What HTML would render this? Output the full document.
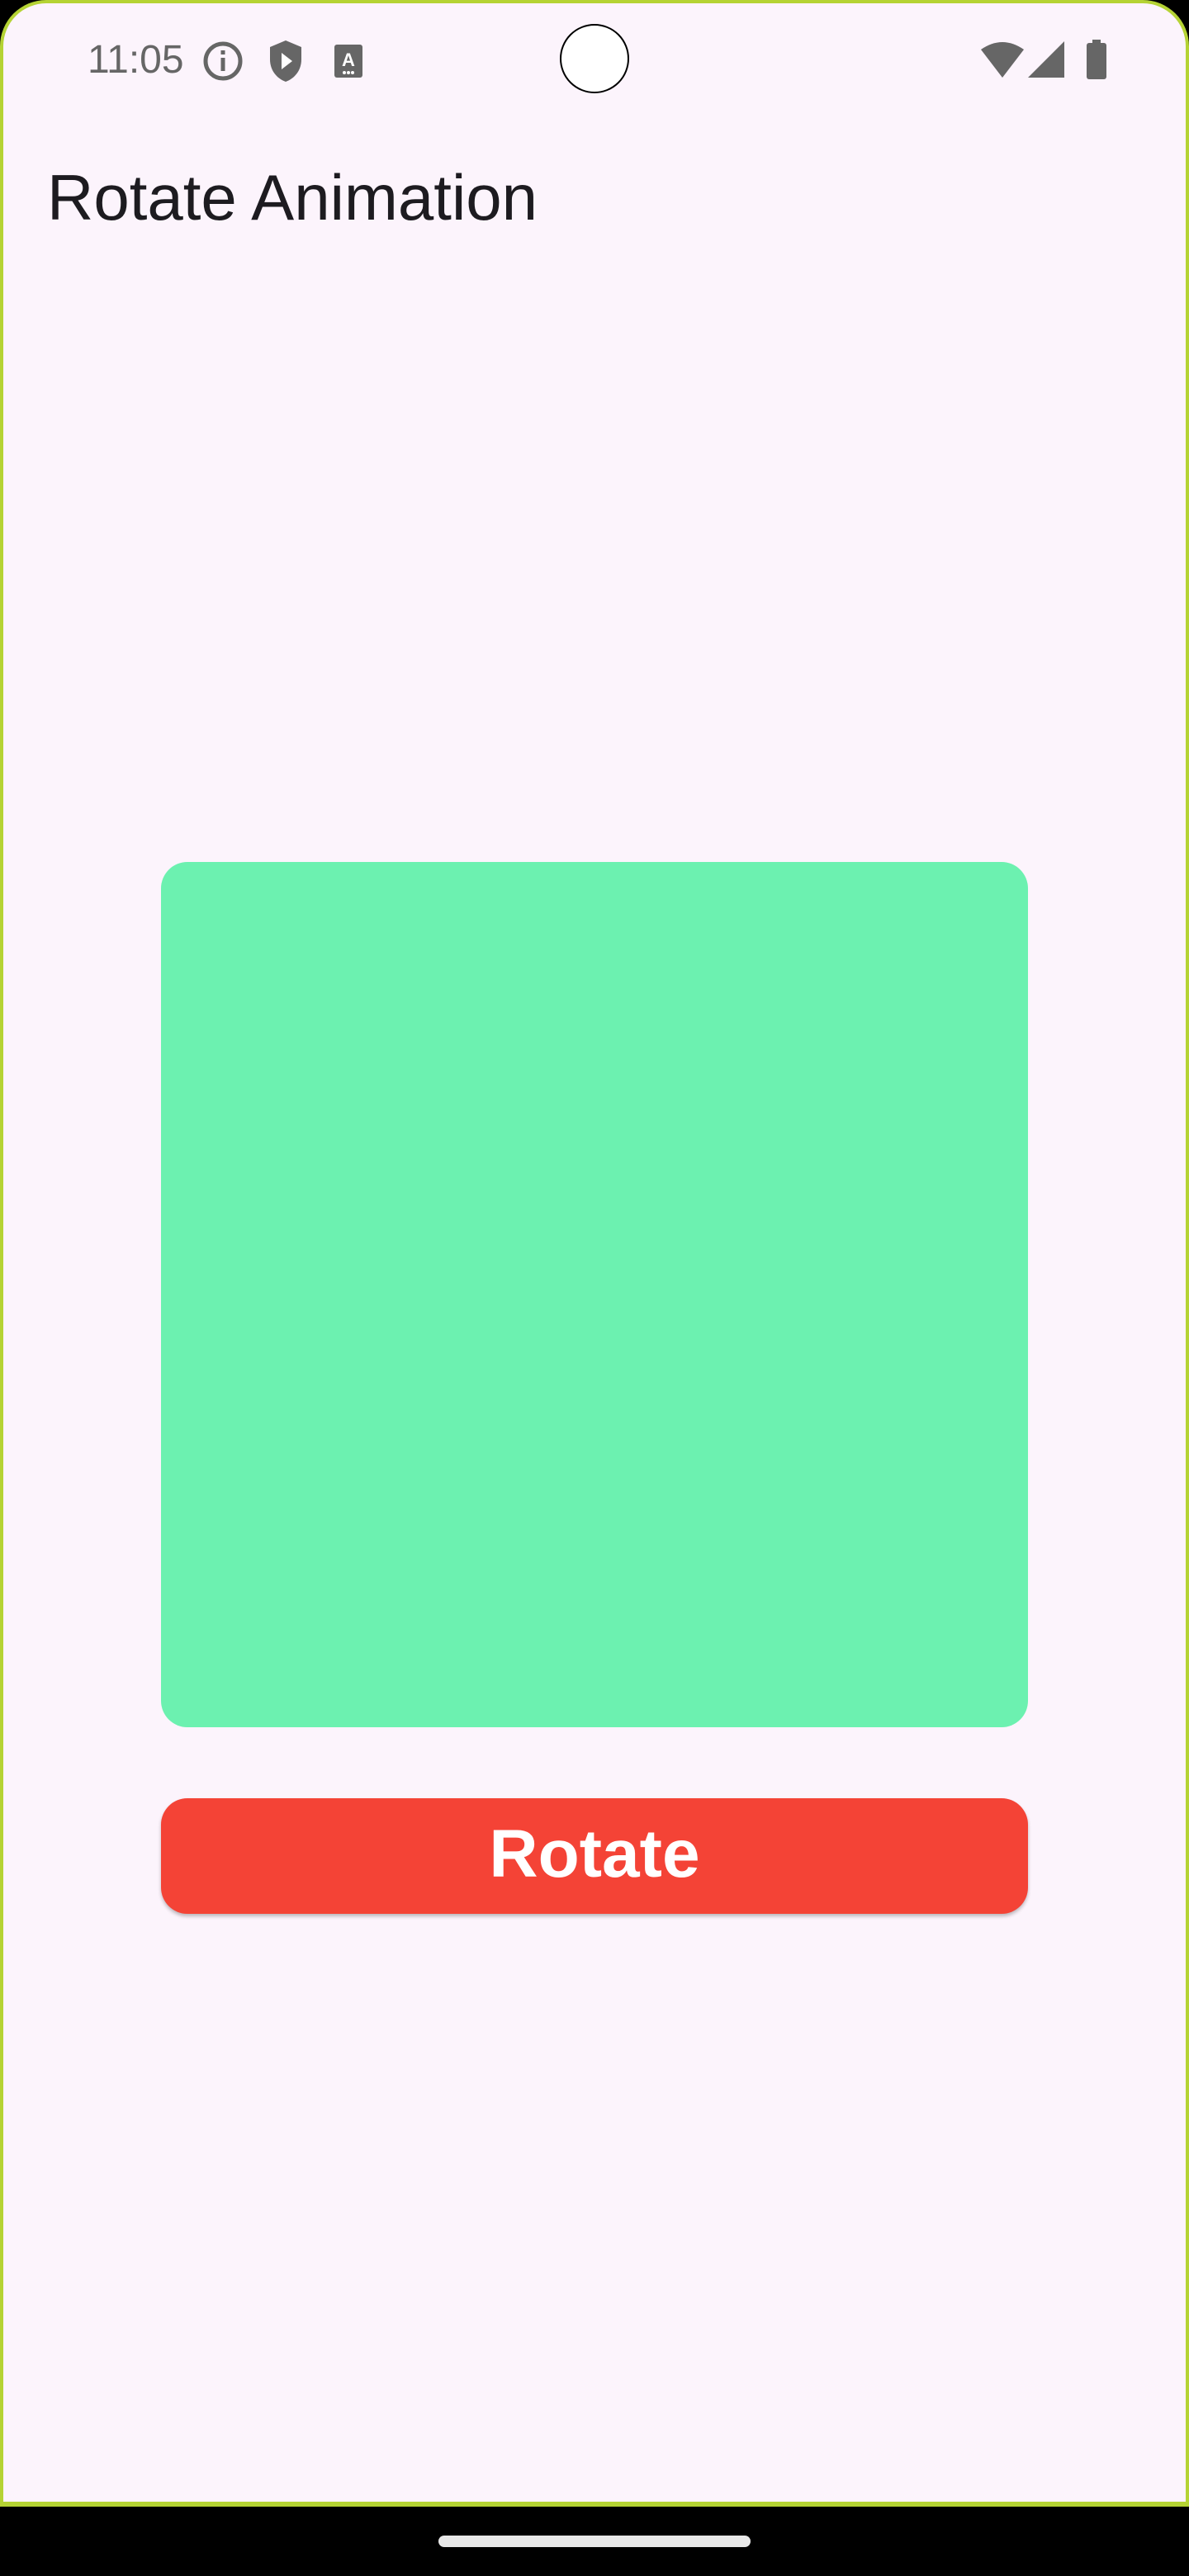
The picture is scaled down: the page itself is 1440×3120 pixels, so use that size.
<!DOCTYPE html>
<html><head><meta charset="utf-8"><style>
html,body{margin:0;padding:0;}
body{width:1440px;height:3120px;position:relative;overflow:hidden;background:#000;font-family:"Liberation Sans",sans-serif;}
.frame{position:absolute;left:0;top:0;width:1440px;height:3036px;background:#b5d334;border-radius:56px 56px 0 0;}
.screen{position:absolute;left:4px;top:4px;width:1432px;height:3026px;background:#fcf4fc;border-radius:52px 52px 0 0;}
.bottom{position:absolute;left:0;top:3036px;width:1440px;height:84px;background:#000;border-radius:0 0 70px 70px;}
.pill{position:absolute;left:531px;top:3071px;width:378px;height:14px;background:#e8e8e8;border-radius:7px;}
.time{position:absolute;left:106px;top:45px;font-size:48px;color:#666;}
.cam{position:absolute;left:678px;top:29px;width:84px;height:84px;border:2px solid #000;border-radius:50%;background:#fff;box-sizing:border-box;}
.title{position:absolute;left:57px;top:194px;font-size:78px;color:#1d1b20;}
.box{position:absolute;left:195px;top:1044px;width:1050px;height:1048px;background:#6cf1b0;border-radius:32px;}
.btn{position:absolute;left:195px;top:2178px;width:1050px;height:140px;background:#f44336;border-radius:32px;box-shadow:0 3px 4px rgba(0,0,0,0.25);color:#fff;font-size:82px;font-weight:bold;text-align:center;line-height:136px;}
</style></head><body>
<div class="frame"></div>
<div class="screen"></div>
<div class="bottom"></div>
<div class="pill"></div>
<div class="time">11:05</div>
<svg style="position:absolute;left:244px;top:48px" width="52" height="52" viewBox="0 0 52 52"><circle cx="26" cy="26" r="21" fill="none" stroke="#666" stroke-width="5"/><rect x="23.5" y="22" width="5" height="16" fill="#666"/><rect x="23.5" y="13" width="5" height="5" fill="#666"/></svg>
<svg style="position:absolute;left:324px;top:48px" width="44" height="52" viewBox="0 0 44 52"><path d="M22 1 L41 9 V24 C41 37 33 47 22 51 C11 47 3 37 3 24 V9 Z" fill="#666"/><path d="M17 16 L30 26 L17 36 Z" fill="#fff"/></svg>
<svg style="position:absolute;left:404px;top:54px" width="36" height="40" viewBox="0 0 36 40"><rect x="1" y="0" width="34" height="40" rx="3" fill="#666"/><text x="18" y="26" font-size="22" font-family="Liberation Sans" font-weight="bold" fill="#fff" text-anchor="middle">A</text><circle cx="13" cy="34" r="2" fill="#fff"/><circle cx="18" cy="34" r="2" fill="#fff"/><circle cx="23" cy="34" r="2" fill="#fff"/></svg>
<div class="cam"></div>
<svg style="position:absolute;left:1186px;top:48px" width="56" height="48" viewBox="0 0 56 48"><path d="M2 12 Q28 -6 54 12 L28 46 Z" fill="#666"/></svg>
<svg style="position:absolute;left:1245px;top:50px" width="46" height="46" viewBox="0 0 46 46"><path d="M44 0 V44 H0 Z" fill="#666"/></svg>
<svg style="position:absolute;left:1314px;top:48px" width="28" height="48" viewBox="0 0 28 48"><rect x="9" y="0" width="10" height="6" fill="#666"/><rect x="2" y="4" width="24" height="44" rx="3" fill="#666"/></svg>
<div class="title">Rotate Animation</div>
<div class="box"></div>
<div class="btn">Rotate</div>
</body></html>
